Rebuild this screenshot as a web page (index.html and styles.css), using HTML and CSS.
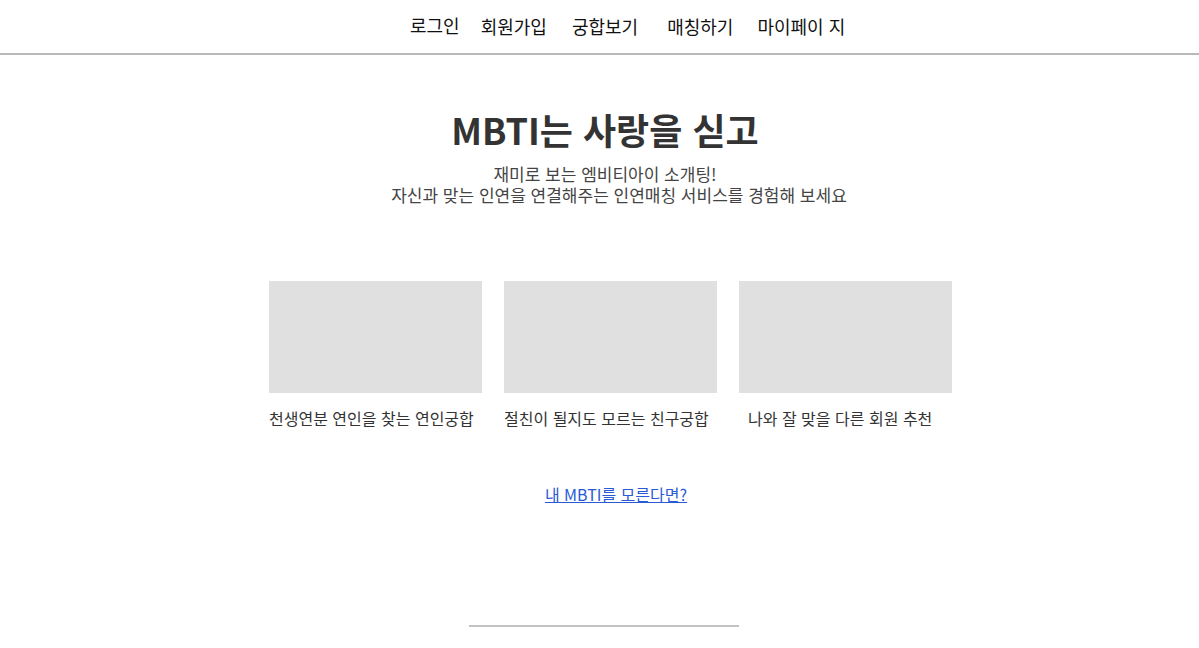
FILE: index.html
```html
<!DOCTYPE html>
<html lang="ko">
<head>
<meta charset="utf-8">
<title>MBTI는 사랑을 싣고</title>
<link rel="stylesheet" href="styles.css">
</head>
<body>
<header class="header">
  <nav class="nav">
    <a class="nav-item nav-login" href="#">로그인</a>
    <a class="nav-item nav-join" href="#">회원가입</a>
    <a class="nav-item nav-match" href="#">궁합보기</a>
    <a class="nav-item nav-matching" href="#">매칭하기</a>
    <a class="nav-item nav-my" href="#">마이페이 지</a>
  </nav>
</header>
<main class="main">
  <section class="hero">
    <h1 class="title">MBTI는 사랑을 싣고</h1>
    <div class="subtitle">
      <p class="sub-line sub-line1">재미로 보는 엠비티아이 소개팅!</p>
      <p class="sub-line sub-line2">자신과 맞는 인연을 연결해주는 인연매칭 서비스를 경험해 보세요</p>
    </div>
  </section>
  <section class="cards">
    <div class="card">
      <div class="card-img"></div>
      <p class="card-text">천생연분 연인을 찾는 연인궁합</p>
    </div>
    <div class="card">
      <div class="card-img"></div>
      <p class="card-text">절친이 될지도 모르는 친구궁합</p>
    </div>
    <div class="card">
      <div class="card-img"></div>
      <p class="card-text card-text-3">나와 잘 맞을 다른 회원 추천</p>
    </div>
  </section>
  <div class="link-wrap"><a class="mbti-link" href="#">내 MBTI를 모른다면?</a></div>
  <div class="footer-line"></div>
</main>
</body>
</html>
```
FILE: styles.css
```css
html, body {
  margin: 0;
  padding: 0;
  background: #fff;
}
body {
  font-family: "Noto Sans CJK KR", "Noto Sans", sans-serif;
  color: #333;
}
.header {
  height: 53px;
  border-bottom: 2px solid #b9b9b9;
}
.nav {
  display: flex;
  padding-left: 410px;
  padding-top: 14px;
}
.nav-item {
  font-size: 18px;
  line-height: 24px;
  color: #111;
  text-decoration: none;
  white-space: pre;
}
.nav-login { margin-top: -1px; }
.nav-join { margin-left: 21px; }
.nav-match { margin-left: 25px; }
.nav-matching { margin-left: 29px; }
.nav-my { margin-left: 24px; }

.main {
  display: flex;
  flex-direction: column;
  align-items: center;
}
.hero {
  display: flex;
  flex-direction: column;
  align-items: center;
  padding-left: 11px;
}
.title {
  margin: 49px 0 0;
  font-size: 36px;
  line-height: 50px;
  font-weight: 700;
  color: #333;
}
.subtitle {
  margin-top: 9px;
  display: flex;
  flex-direction: column;
  align-items: center;
}
.sub-line {
  margin: 0;
  font-size: 17px;
  line-height: 21px;
  color: #444;
  white-space: nowrap;
}
.sub-line2 { padding-left: 28px; }

.cards {
  display: flex;
  gap: 22px;
  margin-top: 76px;
  padding-left: 22px;
}
.card {
  width: 213px;
}
.card-img {
  height: 112px;
  background: #e0e0e0;
}
.card-text {
  margin: 14px 0 0;
  font-size: 16px;
  line-height: 22px;
  color: #333;
  white-space: nowrap;
}
.card-text-3 { padding-left: 9px; }

.link-wrap {
  margin-top: 53px;
  padding-left: 33px;
}
.mbti-link {
  font-size: 16px;
  line-height: 22px;
  color: #2a5ad5;
  text-decoration: underline;
}
.footer-line {
  width: 270px;
  height: 2px;
  background: #c2c2c2;
  margin-top: 119px;
  margin-left: 9px;
}
```
